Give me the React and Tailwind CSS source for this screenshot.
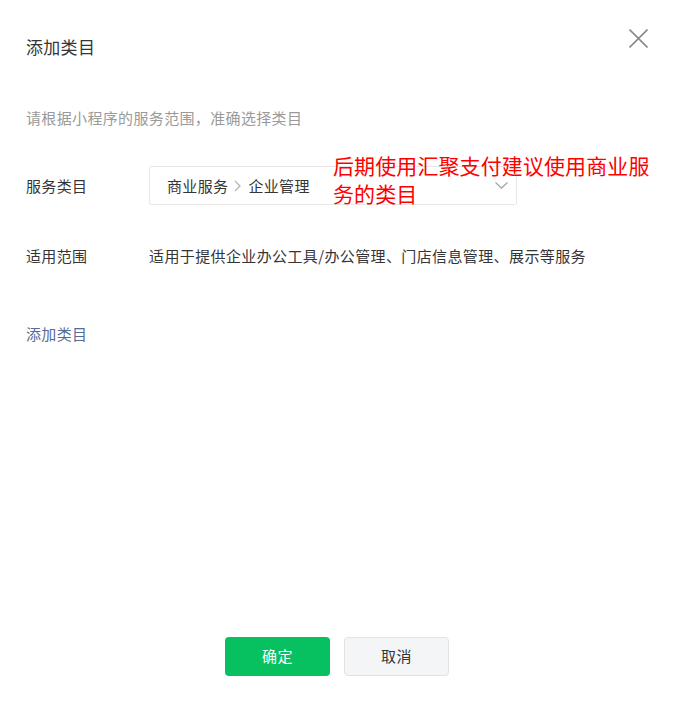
import React from "react";

const FONT = { fontFamily: '"Noto Sans CJK SC", "Noto Sans", sans-serif' };

export default function App() {
  return (
    <div
      className="relative flex h-[707px] w-[674px] flex-col bg-white text-[#353535]"
      style={FONT}
    >
      <button className="absolute left-[629px] top-[29px] h-[19px] w-[19px]">
        <svg width="19" height="19" viewBox="0 0 19 19">
          <path d="M0.5 0.5 L18.5 18.5 M18.5 0.5 L0.5 18.5" stroke="#8a8a8a" strokeWidth="1.6" />
        </svg>
      </button>

      <div className="px-[26px] pt-[35px] text-[17px] leading-[24px] tracking-[0.3px] text-[#353535]">添加类目</div>

      <div className="mt-[49px] px-[26px] text-[15px] leading-[20px] tracking-[0.35px] text-[#9a9a9a]">
        请根据小程序的服务范围，准确选择类目
      </div>

      <div className="relative mt-[38px] flex items-center px-[26px]">
        <div className="w-[123px] text-[15px] leading-[20px] tracking-[0.35px]">服务类目</div>
        <div className="flex h-[39px] w-[368px] items-center justify-between rounded-[2px] border border-[#e7e7e7] pl-[17px] pr-[8px]">
          <div className="flex items-center text-[15px] leading-[20px] tracking-[0.35px] text-[#353535]">
            <span>商业服务</span>
            <svg className="ml-[6px] mr-[7px]" width="7" height="12" viewBox="0 0 7 12">
              <path d="M1 1 L6 6 L1 11" fill="none" stroke="#b2b2b2" strokeWidth="1.2" />
            </svg>
            <span>企业管理</span>
          </div>
          <svg width="13" height="7" viewBox="0 0 13 7">
            <path d="M0.5 0.5 L6.5 6 L12.5 0.5" fill="none" stroke="#a8a8a8" strokeWidth="1.3" />
          </svg>
        </div>
        <div className="absolute left-[333px] top-[-15px] text-[21px] leading-[28px] tracking-[0.1px] text-[#ff0000]">
          后期使用汇聚支付建议使用商业服
          <br />
          务的类目
        </div>
      </div>

      <div className="mt-[41px] flex items-center px-[26px]">
        <div className="w-[123px] text-[15px] leading-[20px] tracking-[0.35px]">适用范围</div>
        <div className="text-[15px] leading-[20px] tracking-[0.38px] text-[#353535]">
          适用于提供企业办公工具/办公管理、门店信息管理、展示等服务
        </div>
      </div>

      <div className="mt-[58px] px-[26px] text-[15px] leading-[20px] tracking-[0.35px] text-[#576b95]">添加类目</div>

      <div className="mt-auto flex justify-center gap-[14px] pb-[31px]">
        <button className="h-[39px] w-[105px] rounded-[4px] bg-[#07c160] text-[15px] font-normal tracking-[0.5px] text-white">
          确定
        </button>
        <button className="h-[39px] w-[105px] rounded-[4px] border border-[#e2e2e2] bg-[#f4f5f7] text-[15px] font-normal tracking-[0.5px] text-[#353535]">
          取消
        </button>
      </div>
    </div>
  );
}
